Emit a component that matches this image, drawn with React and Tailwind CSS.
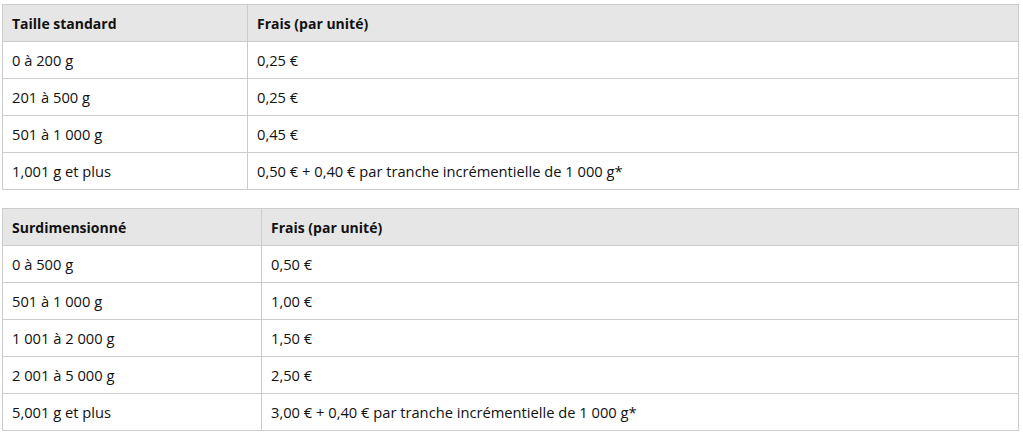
const standard = [
  ['0 à 200 g', '0,25 €'],
  ['201 à 500 g', '0,25 €'],
  ['501 à 1 000 g', '0,45 €'],
  ['1,001 g et plus', '0,50 € + 0,40 € par tranche incrémentielle de 1 000 g*'],
];

const oversize = [
  ['0 à 500 g', '0,50 €'],
  ['501 à 1 000 g', '1,00 €'],
  ['1 001 à 2 000 g', '1,50 €'],
  ['2 001 à 5 000 g', '2,50 €'],
  ['5,001 g et plus', '3,00 € + 0,40 € par tranche incrémentielle de 1 000 g*'],
];

function FeeTable({ title, rows, firstCol }) {
  return (
    <table className="w-[1017px] border-collapse border border-[#cccccc] text-[14.7px] text-[#111111]">
      <colgroup>
        <col style={{ width: firstCol }} />
        <col />
      </colgroup>
      <thead>
        <tr className="h-[37px] bg-[#e6e6e6] text-[14px]">
          <th className="border border-[#cccccc] pl-[9px] text-left font-bold">{title}</th>
          <th className="border border-[#cccccc] pl-[9px] text-left font-bold">Frais (par unité)</th>
        </tr>
      </thead>
      <tbody>
        {rows.map(([range, fee]) => (
          <tr key={range} className="h-[37px]">
            <td className="border border-[#cccccc] pl-[9px]">{range}</td>
            <td className="border border-[#cccccc] pl-[9px]">{fee}</td>
          </tr>
        ))}
      </tbody>
    </table>
  );
}

export default function App() {
  return (
    <div
      className="min-h-[434px] bg-white pl-[2px] pt-[4px]"
      style={{ fontFamily: '"Open Sans", "Noto Sans", sans-serif' }}
    >
      <div className="flex flex-col gap-[18px]">
        <FeeTable title="Taille standard" rows={standard} firstCol="245px" />
        <FeeTable title="Surdimensionné" rows={oversize} firstCol="259px" />
      </div>
    </div>
  );
}
